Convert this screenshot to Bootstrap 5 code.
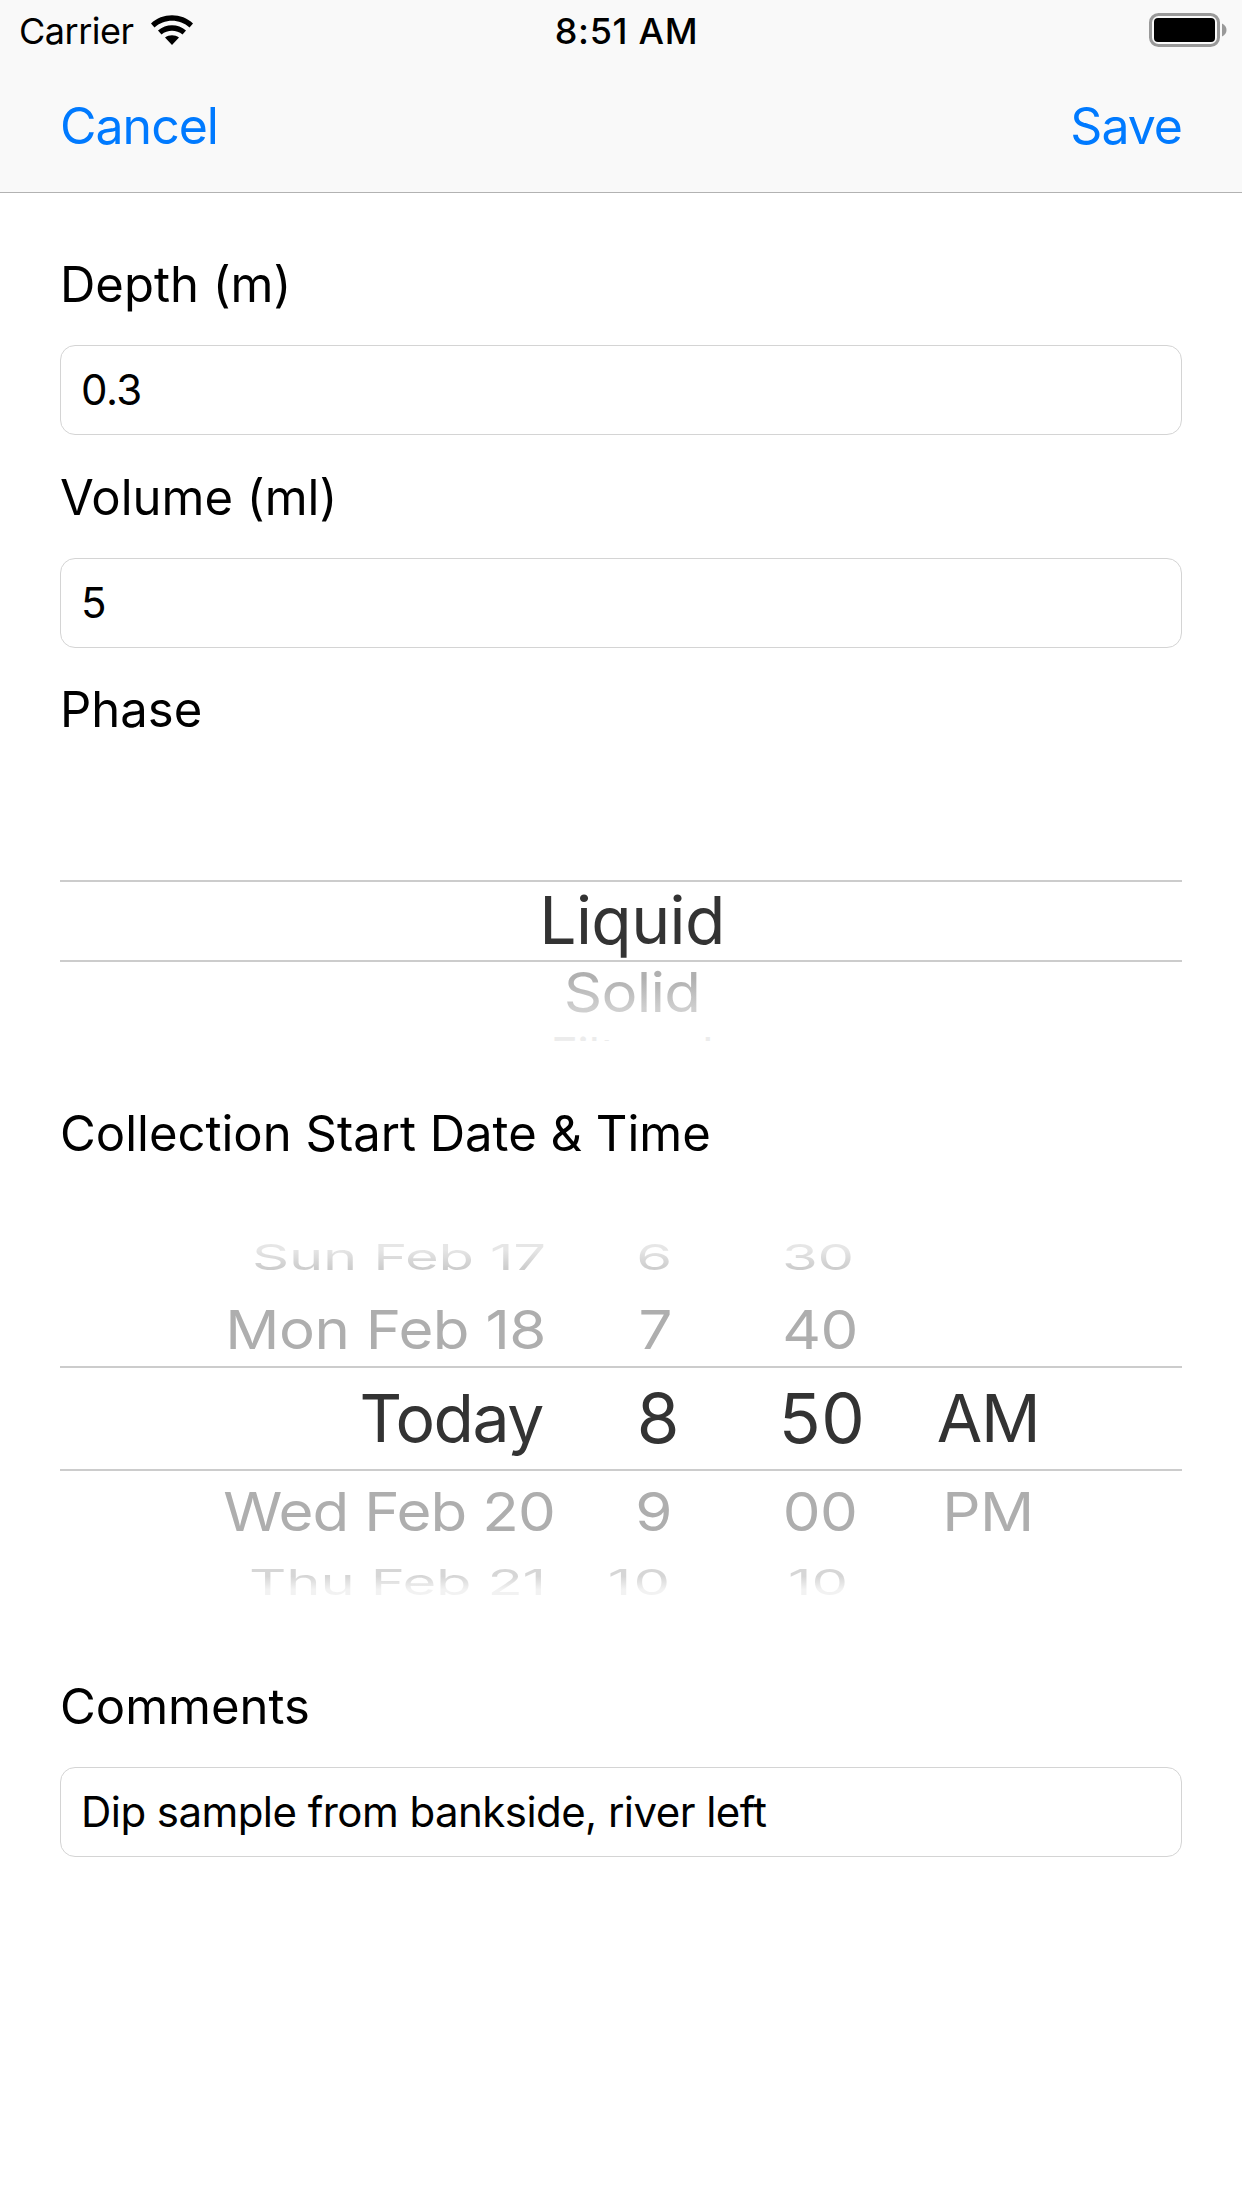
<!DOCTYPE html>
<html lang="en">
<head>
<meta charset="utf-8">
<title>Sample</title>
<link rel="stylesheet" href="https://cdn.jsdelivr.net/npm/bootstrap@5.3.0/dist/css/bootstrap.min.css">
<style>
html, body { margin: 0; background: #fff; }
body { font-family: Inter, "Liberation Sans", sans-serif; color: #000; width: 1242px; height: 2208px; overflow: hidden; }
.app-head { background: #f9f9f9; height: 193px; border-bottom: 1px solid #b2b2b2; }
.status-row { height: 60px; padding: 0 19px; position: relative; }
.status-time { position: absolute; left: 0; right: 0; top: 10px; text-align: center; font-weight: 500; font-size: 36px; line-height: 42px; padding-left: 11px; letter-spacing: .7px; }
.carrier { font-size: 36px; letter-spacing: -.5px; line-height: 42px; margin-top: 10px; }
.wifi-ic { margin: 15px 0 0 17px; }
.batt-ic { margin: 13px -4px 0 auto; }
.nav-row { height: 132px; padding: 0 60px; }
.nav-act { color: #007aff; font-size: 50px; line-height: 60px; letter-spacing: -1px; text-decoration: none; }
.form-wrap { padding: 0 60px; }
.fld-label { font-size: 49px; line-height: 60px; margin: 0; }
.lb-depth { margin-top: 62px; }
.lb-vol { margin-top: 33px; }
.lb-phase { margin-top: 32px; }
.lb-coll { margin-top: 63px; }
.lb-comm { margin-top: 80px; }
.fld-input.form-control { height: 90px; margin-top: 30px; border: 1.5px solid #d4d4d4; border-radius: 15px; font-size: 42px; line-height: 50px; padding: 0 20px 2px; color: #000; letter-spacing: -.55px; box-shadow: none; font-family: Inter, "Liberation Sans", sans-serif; }
.wheel { display: grid; color: #333; font-size: 66px; }
.wheel-phase { grid-template-rows: 140px 82px 62px 17px; }
.wheel-cell { grid-column: 1; text-align: center; white-space: nowrap; overflow: hidden; padding-left: 22px; }
.band { grid-row: 2; grid-column: 1 / -1; border-top: 2px solid #ccc; border-bottom: 2px solid #ccc; }
.w-liquid { grid-row: 2; line-height: 80px; letter-spacing: -.6px; }
.w-solid { grid-row: 3; font-size: 60px; line-height: 60px; letter-spacing: -.8px; }
.w-solid span { display: inline-block; transform: scaleY(.92); background: linear-gradient(#b0b0b0 25%, #cfcfcf 80%); -webkit-background-clip: text; background-clip: text; color: transparent; }
.w-hint { grid-row: 4; color: #ececec; font-size: 46px; line-height: 60px; }
.w-hint span { display: block; margin-top: 0; }
.wheel-date { margin-top: 58px; grid-template-columns: 483px 137px 203px 210px 89px; grid-template-rows: 70px 74px 105px 80px 46px; }
.wheel-date .band { grid-row: 3; }
.dc { white-space: nowrap; display: flex; align-items: center; font-size: 66px; letter-spacing: -1.4px; overflow: hidden; }
.dc-r { justify-content: flex-end; }
.dc-c { justify-content: center; }
.r1 { grid-row: 1; } .r2 { grid-row: 2; } .r3 { grid-row: 3; } .r4 { grid-row: 4; } .r5 { grid-row: 5; }
.c1 { grid-column: 1; } .c2 { grid-column: 2; } .c3 { grid-column: 3; padding-left: 81px; } .c4 { grid-column: 4; }
.dc > span { display: inline-block; }
.c3 > span { letter-spacing: 0; }
.r3.c2 > span, .r3.c3 > span { font-size: 69px; letter-spacing: .5px; }
.tone-far > span { background: linear-gradient(#e6e6e6 35%, #cdcdcd 70%); -webkit-background-clip: text; background-clip: text; color: transparent; font-size: 58px; letter-spacing: -.2px; transform: scaleY(.62); }
.tone-near > span { color: #aeaeae; font-size: 60px; transform: scaleY(.9); letter-spacing: -.5px; }
.tone-clip { align-items: flex-start; }
.tone-clip > span { background: linear-gradient(#d6d6d6 35%, #f2f2f2 70%); -webkit-background-clip: text; background-clip: text; color: transparent; font-size: 58px; line-height: 60px; letter-spacing: -.2px; transform: scaleY(.62); margin-top: 1px; }
.c1.tone-far, .c1.tone-near, .c1.tone-clip { margin-right: -3px; }
.c2.tone-near > span, .c2.tone-far > span, .c2.tone-clip > span { margin-right: 8px; }
.c2.tone-clip > span { letter-spacing: 2px; }
.c3.tone-near > span { margin-left: -4px; }
.c3.tone-far > span, .c3.tone-clip > span { margin-left: -8px; }
.c1.off-wed { margin-right: -12px; }
.off-wed > span { letter-spacing: -.9px; }
</style>
</head>
<body>
<header class="app-head">
  <div class="status-row d-flex align-items-start">
    <span class="carrier">Carrier</span>
    <svg class="wifi-ic" width="42" height="30" viewBox="0 0 42 30" aria-hidden="true">
      <path d="M0 8.5 C11 -2.5 31 -2.5 42 8.5 L38.5 12.5 C29 3.5 13 3.5 3.5 12.5 Z M7 15.5 C15 8.5 27 8.5 35 15.5 L31.5 19.5 C25.5 14.5 16.5 14.5 10.5 19.5 Z M14 22.5 C18 19.5 24 19.5 28 22.5 L21 30 Z" fill="#000"/>
    </svg>
    <span class="status-time">8:51 AM</span>
    <svg class="batt-ic" width="78" height="34" viewBox="0 0 78 34" aria-hidden="true">
      <rect x="1.5" y="1.5" width="68" height="31" rx="8" fill="none" stroke="#999" stroke-width="3"/>
      <rect x="5" y="5" width="61" height="24" rx="4" fill="#000"/>
      <path d="M73 10.5 C76 12 77.5 14 77.5 17 C77.5 20 76 22 73 23.5 Z" fill="#999"/>
    </svg>
  </div>
  <nav class="nav-row d-flex justify-content-between align-items-center">
    <a class="nav-act" href="#">Cancel</a>
    <a class="nav-act" href="#">Save</a>
  </nav>
</header>
<main class="form-wrap">
  <p class="fld-label lb-depth">Depth (m)</p>
  <input class="form-control fld-input" value="0.3">
  <p class="fld-label lb-vol">Volume (ml)</p>
  <input class="form-control fld-input" value="5">
  <p class="fld-label lb-phase">Phase</p>
  <div class="wheel wheel-phase">
    <div class="band"></div>
    <div class="wheel-cell w-liquid">Liquid</div>
    <div class="wheel-cell w-solid"><span>Solid</span></div>
    <div class="wheel-cell w-hint"><span>Filtered</span></div>
  </div>
  <p class="fld-label lb-coll">Collection Start Date &amp; Time</p>
  <div class="wheel wheel-date">
    <div class="band"></div>
    <div class="dc dc-r r1 c1 tone-far"><span>Sun Feb 17</span></div>
    <div class="dc dc-r r1 c2 tone-far"><span>6</span></div>
    <div class="dc dc-c r1 c3 tone-far"><span>30</span></div>
    <div class="dc dc-r r2 c1 tone-near"><span>Mon Feb 18</span></div>
    <div class="dc dc-r r2 c2 tone-near"><span>7</span></div>
    <div class="dc dc-c r2 c3 tone-near"><span>40</span></div>
    <div class="dc dc-r r3 c1"><span>Today</span></div>
    <div class="dc dc-r r3 c2"><span>8</span></div>
    <div class="dc dc-c r3 c3"><span>50</span></div>
    <div class="dc dc-c r3 c4"><span>AM</span></div>
    <div class="dc dc-r r4 c1 tone-near off-wed"><span>Wed Feb 20</span></div>
    <div class="dc dc-r r4 c2 tone-near"><span>9</span></div>
    <div class="dc dc-c r4 c3 tone-near"><span>00</span></div>
    <div class="dc dc-c r4 c4 tone-near"><span>PM</span></div>
    <div class="dc dc-r r5 c1 tone-clip"><span>Thu Feb 21</span></div>
    <div class="dc dc-r r5 c2 tone-clip"><span>10</span></div>
    <div class="dc dc-c r5 c3 tone-clip"><span>10</span></div>
  </div>
  <p class="fld-label lb-comm">Comments</p>
  <input class="form-control fld-input" value="Dip sample from bankside, river left">
</main>
<script src="https://cdn.jsdelivr.net/npm/bootstrap@5.3.0/dist/js/bootstrap.bundle.min.js"></script>
</body>
</html>
